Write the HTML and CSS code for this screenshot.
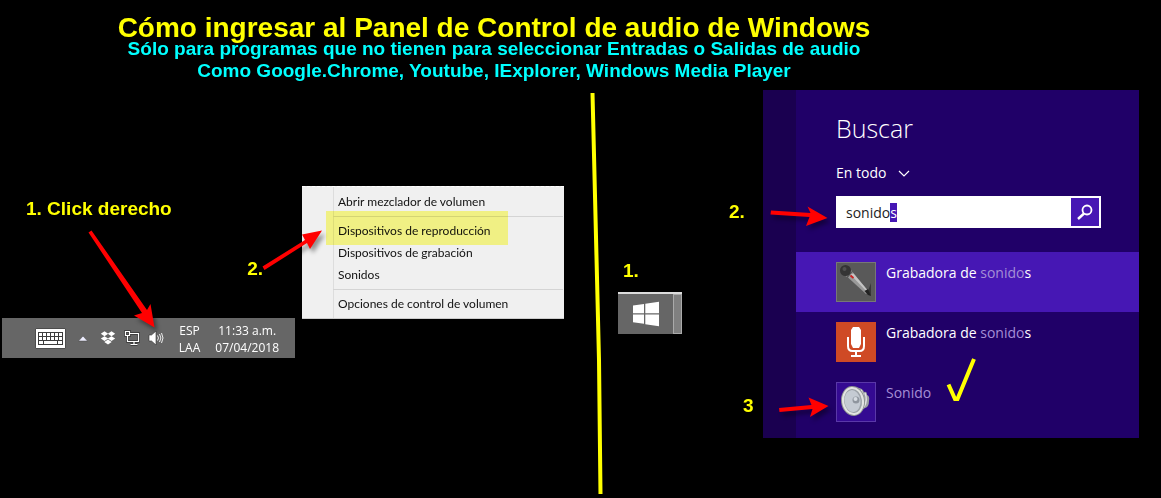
FILE: index.html
```html
<!DOCTYPE html>
<html lang="es">
<head>
<meta charset="utf-8">
<title>Panel de Control de audio de Windows</title>
<link rel="stylesheet" href="styles.css">
</head>
<body>
<header class="header">
  <h1 class="title">Cómo ingresar al Panel de Control de audio de Windows</h1>
  <p class="subtitle">Sólo para programas que no tienen para seleccionar Entradas o Salidas de audio<br>Como Google.Chrome, Youtube, IExplorer, Windows Media Player</p>
</header>
<main class="guide">
  <section class="tray">
    <p class="step step-click">1. Click derecho</p>
    <p class="step step-menu">2.</p>
    <div class="taskbar">
      <button class="task-icon" aria-label="Teclado"><svg width="31" height="21" viewBox="0 0 31 21"><rect x=".5" y=".5" width="30" height="20" rx="1" fill="#333"/><rect x="1" y="1" width="29" height="19" fill="#fff"/><rect x="3" y="4" width="25" height="13" fill="#3c3c3c"/><g fill="#fff"><path d="M4 5h3v3H4zM8 5h3v3H8zM12 5h3v3h-3zM16 5h3v3h-3zM20 5h3v3h-3zM24 5h3v3h-3zM4 9h3v3H4zM8 9h3v3H8zM12 9h3v3h-3zM16 9h3v3h-3zM20 9h3v3h-3zM24 9h3v3h-3zM4 13h4v3H4zM9 13h13v3H9zM23 13h4v3h-4z"/></g></svg></button>
      <button class="task-icon" aria-label="Mostrar iconos ocultos"><svg width="10" height="7" viewBox="0 0 10 7"><path d="M5 1 9.500 6H.5z" fill="#eef" stroke="#444" stroke-width=".5"/></svg></button>
      <button class="task-icon" aria-label="Dropbox"><svg width="16" height="14" viewBox="0 0 16 14"><path d="M4.500 .3 8.200 2.800 4.500 5.200 .8 2.800zM11.500 .3 15.200 2.800 11.500 5.200 7.800 2.800zM4.500 5.200 8.200 7.600 4.500 10 .8 7.600zM11.500 5.200 15.200 7.600 11.500 10 7.800 7.600zM8 8.600l3.700 2.400L8 13.600 4.300 11z" fill="#fff"/></svg></button>
      <button class="task-icon" aria-label="Red"><svg width="16" height="16" viewBox="0 0 16 16" fill="none"><path d="M6 3.500h8.500v8H5M10 11.500v3M6.500 14.500h7M1.500 1.500h4v4h-4zM3.500 5.500v6H6" stroke="#333" stroke-width="2.600"/><path d="M6 3.500h8.500v8H5M10 11.500v3M6.500 14.500h7M1.500 1.500h4v4h-4zM3.500 5.500v6H6" stroke="#fff" stroke-width="1.200"/></svg></button>
      <button class="task-icon" aria-label="Volumen"><svg width="16" height="16" viewBox="0 0 16 16" fill="none"><path d="M1 5h2.500L8 1v14l-4.500-4H1z" fill="#fff" stroke="#333" stroke-width=".6"/><path d="M9.500 5.500q2 2.500 0 5M11.500 4q2.800 4 0 8M13.500 3q3 5 0 10" stroke="#eee" stroke-width="1"/></svg></button>
      <button class="task-text task-lang">ESP<br>LAA</button>
      <button class="task-text task-clock">11:33 a.m.<br>07/04/2018</button>
    </div>
    <svg class="arrow arrow-tray" width="80" height="102" viewBox="85 228 80 102"><path d="m88.500 232.500 3-2 55.500 79.500 3.500-6 4 23.500-20.500-12 8-2.500z" fill="#f00"/></svg>
    <svg class="arrow arrow-menu" width="70" height="48" viewBox="258 226 70 48"><path d="M262.500 266.500 305 240l-3-5.500 20-4-12 18.500-3-6L264.500 270z" fill="#f00"/></svg>
  </section>

  <div class="menu" role="menu">
    <button class="menu-item" role="menuitem">Abrir mezclador de volumen</button>
    <hr class="menu-line">
    <button class="menu-item menu-marked" role="menuitem">Dispositivos de reproducción</button>
    <button class="menu-item" role="menuitem">Dispositivos de grabación</button>
    <button class="menu-item" role="menuitem">Sonidos</button>
    <hr class="menu-line">
    <button class="menu-item" role="menuitem">Opciones de control de volumen</button>
  </div>

  <svg class="divider" width="16" height="404" viewBox="588 90 16 404"><path d="M592.500 93 599 360 600.500 494" fill="none" stroke="#ff0" stroke-width="4"/></svg>

  <section class="start">
    <p class="step step-start">1.</p>
    <div class="start-bar">
      <button class="start-button" aria-label="Inicio"><svg width="28" height="26" viewBox="0 0 28 26"><path d="M1 4.500 12 3v9.300H1zM13.300 2.800 27 .8v11.500H13.300zM1 13.500h11v9.300L1 21.200zM13.300 13.500H27v11.700l-13.700-2z" fill="#fff"/></svg></button>
      <span class="start-edge"></span>
    </div>
  </section>

  <section class="search-steps">
    <p class="step step-query">2.</p>
    <p class="step step-result">3</p>
    <svg class="arrow arrow-query" width="62" height="24" viewBox="768 204 62 24"><path d="m771 210.500 39.500 2.500-3-6.500 20 11.500-21.500 8 3.500-9-39-2.500z" fill="#f00"/></svg>
    <svg class="arrow arrow-result" width="54" height="24" viewBox="776 394 54 24"><path d="m779 408 32.500-3-3-7.500 20 8.500-18.500 11 2.500-8-33 3z" fill="#f00"/></svg>
  </section>

  <section class="search">
    <div class="search-head">
      <h2 class="search-title">Buscar</h2>
      <div class="scope">
        <select class="scope-select" aria-label="Ámbito"><option>En todo</option></select>
        <svg width="12" height="8" viewBox="0 0 12 8"><path d="m1 2 5 5 5-5" fill="none" stroke="#fff" stroke-width="1.200"/></svg>
      </div>
      <form class="search-box">
        <input class="search-input" id="query" type="text" value="sonidos" aria-label="Buscar" spellcheck="false">
        <button class="search-button" type="button" aria-label="Buscar"><svg width="18" height="18" viewBox="0 0 18 18" fill="none" stroke="#fff"><circle cx="11" cy="7" r="4.500" stroke-width="1.800"/><path d="m8 10.500-6 5.500" stroke-width="2.400"/></svg></button>
      </form>
    </div>
    <ul class="results">
      <li><a class="result result-active" href="#">
        <svg class="result-icon" width="40" height="40" viewBox="0 0 40 40"><rect x=".5" y=".5" width="39" height="39" fill="#595959" stroke="#777"/><path d="m32 29 3-8v13z" fill="#383838"/><path d="M12 15.500 16.500 10 33 30l-3 2z" fill="#999"/><path d="m14.500 12.500 3-1L33 30l-1 1z" fill="#c4c4c4"/><path d="m28.500 29 3.500-2 3 7-3-1z" fill="#222"/><path d="m10 14.500 5.500-6" stroke="#888" stroke-width="1.500"/><circle cx="9.500" cy="8.500" r="5.500" fill="#343434"/><circle cx="8.500" cy="7" r="2" fill="#505050"/><path d="m14.500 13.500 3 2.500" stroke="#c22" stroke-width="1.800"/></svg>
        <span>Grabadora de <mark class="match">sonido</mark>s</span></a></li>
      <li><a class="result" href="#">
        <svg class="result-icon" width="40" height="40" viewBox="0 0 40 40"><path d="M0 0h40v40H0z" fill="#cf4a25"/><path d="M17 5h6l2 3v14l-2 4h-6l-2-4V8z" fill="#fff"/><path d="M12 15v9q0 5 4.500 5h7q4.500 0 4.500-5v-9M20 29v5M15 34h10" fill="none" stroke="#fff" stroke-width="2"/></svg>
        <span>Grabadora de <mark class="match">sonido</mark>s</span></a></li>
      <li><a class="result" href="#">
        <svg class="result-icon" width="40" height="40" viewBox="0 0 40 40"><rect x=".5" y=".5" width="39" height="39" fill="#340a92" stroke="#5a38a8"/><path d="M19 5q8 1 9 5 3-1 3 3 3 1 2 6 0 6-4 7l-6 4z" fill="#9b9fa2"/><path d="M25 8q5 8 1 20M29 11q3 7-1 14" fill="none" stroke="#e2e2e2" stroke-width="1.500"/><ellipse cx="17" cy="19" rx="12" ry="15" transform="rotate(-7 17 19)" fill="#8d9192"/><ellipse cx="17" cy="19" rx="11" ry="14" transform="rotate(-7 17 19)" fill="#e2e4e2"/><ellipse cx="17" cy="19" rx="9" ry="12" transform="rotate(-7 17 19)" fill="#9ca2a8"/><ellipse cx="16.500" cy="19" rx="8" ry="11" transform="rotate(-7 17 19)" fill="#c5cbd3"/><circle cx="20" cy="18" r="3.500" fill="#8f959e"/><circle cx="19.500" cy="17" r="2" fill="#d7dce2"/></svg>
        <span><mark class="match">Sonido</mark></span></a></li>
    </ul>
    <svg class="check" width="36" height="48" viewBox="944 356 36 48"><path d="m948.500 384.500 6.500 14.500h2.500l16.500-40" fill="none" stroke="#ff0" stroke-width="4"/></svg>
  </section>
</main>
<script src="script.js"></script>
</body>
</html>
```
FILE: script.js
```js
// Select the autocompleted last letter of the query.
const query = document.getElementById("query");
query.focus({ preventScroll: true });
query.setSelectionRange(6, 7);
```
FILE: styles.css
```css
* { box-sizing: border-box; }
body {
  margin: 0;
  background: #000;
  color: #fff;
  font-family: "Open Sans", "Noto Sans", sans-serif;
}
h1, h2, p, ul { margin: 0; padding: 0; font-weight: normal; }
ul { list-style: none; }
button, input, select {
  margin: 0;
  padding: 0;
  border: 0;
  background: none;
  color: inherit;
  font: inherit;
}
svg { display: block; flex: none; }

.header {
  max-width: 988px;
  padding: 18px 0 8px;
  text-align: center;
  font-family: "Liberation Sans", Arial, sans-serif;
}
.title { color: #ff0; font-size: 28px; font-weight: bold; line-height: 20px; }
.subtitle { color: #0ff; font-size: 19px; font-weight: bold; line-height: 22px; }

.guide { display: flex; align-items: flex-start; padding-right: 22px; }
.step {
  color: #ff0;
  font-family: "Liberation Sans", Arial, sans-serif;
  font-size: 19px;
  font-weight: bold;
  line-height: 22px;
}
.arrow { position: absolute; filter: drop-shadow(3px 4px 2px rgba(0, 0, 0, .4)); z-index: 1; }

.tray {
  position: relative;
  flex: 0 0 302px;
  display: flex;
  flex-direction: column;
  gap: 38px;
  padding-top: 108px;
}
.step-click { padding-left: 26px; }
.step-menu { padding-right: 39px; text-align: right; }
.arrow-tray { left: 85px; top: 138px; }
.arrow-menu { left: 258px; top: 136px; }

.taskbar {
  display: flex;
  align-items: center;
  gap: 8px;
  height: 40px;
  margin: 0 7px 0 2px;
  padding: 0 16px 0 33px;
  background: #666;
}
.task-icon:first-child { margin-right: 4px; }
.task-icon:nth-child(2) { margin-right: 4px; }
.task-text {
  padding-top: 2px;
  font-size: 12px;
  line-height: 17px;
  text-align: center;
  white-space: nowrap;
}
.task-lang { margin-left: auto; }
.task-clock { margin-left: 7px; }

.menu {
  position: relative;
  flex: 0 0 262px;
  margin-top: 96px;
  padding: 4px 0 3px;
  border-top: 1px dashed #fff;
  border-bottom: 1px solid #ccc;
  background: linear-gradient(#ddd, #ddd) 31px 0 / 1px 100% no-repeat #f0f0f0;
  color: #111;
}
.menu-item {
  display: block;
  width: 100%;
  padding-left: 36px;
  font-family: Lato, "Open Sans", sans-serif;
  font-size: 12px;
  line-height: 22px;
  text-align: left;
  white-space: nowrap;
}
.menu-line { height: 1px; margin: 3px 1px 3px 31px; border: 0; background: #d4d4d4; }
.menu-marked { position: relative; }
.menu-marked::before {
  content: "";
  position: absolute;
  inset: -9px 56px -3px 24px;
  background: #ffff8c;
  mix-blend-mode: multiply;
}

.divider { margin-left: 24px; }

.start { flex: none; padding: 170px 0 0 14px; }
.step-start { padding: 0 0 0 5px; margin-bottom: 10px; }
.start-bar { display: flex; width: 64px; height: 42px; border-top: 2px solid #ddd; background: #666; }
.start-button { flex: 1; display: flex; align-items: center; justify-content: center; }
.start-edge { width: 9px; border: 1px solid #aaa; background: #808080; }

.search-steps { position: relative; flex: 0 0 81px; padding-top: 111px; }
.step-query { padding-left: 47px; }
.step-result { margin-top: 172px; padding-left: 61px; }
.arrow-query { left: 86px; top: 114px; }
.arrow-result { left: 94px; top: 304px; }

.search {
  position: relative;
  flex: 1;
  min-width: 340px;
  padding-bottom: 6px;
  border-left: 33px solid #1a0050;
  background: #200068;
}
.search-head { padding: 20px 38px 24px 40px; }
.search-title { font-size: 25px; font-weight: 300; line-height: 36px; }
.scope { display: flex; align-items: center; gap: 11px; margin: 16px 0 12px; }
.scope-select { appearance: none; font-size: 14px; line-height: 22px; }
.search-box { display: flex; height: 32px; padding: 2px; background: #fff; }
.search-input { flex: 1; min-width: 0; padding-left: 8px; color: #222; font-size: 14px; outline: 0; }
.search-input::selection { background: #4617b4; color: #fff; }
.search-button { display: flex; align-items: center; justify-content: center; width: 28px; background: #4617b4; }

.result {
  display: flex;
  gap: 10px;
  padding: 10px 40px;
  color: #fff;
  font-size: 14px;
  line-height: 22px;
  text-decoration: none;
}
.result-active { background: #4617b4; }
.match { background: none; color: #a58fd6; }
.check { position: absolute; left: 148px; top: 266px; }
```
